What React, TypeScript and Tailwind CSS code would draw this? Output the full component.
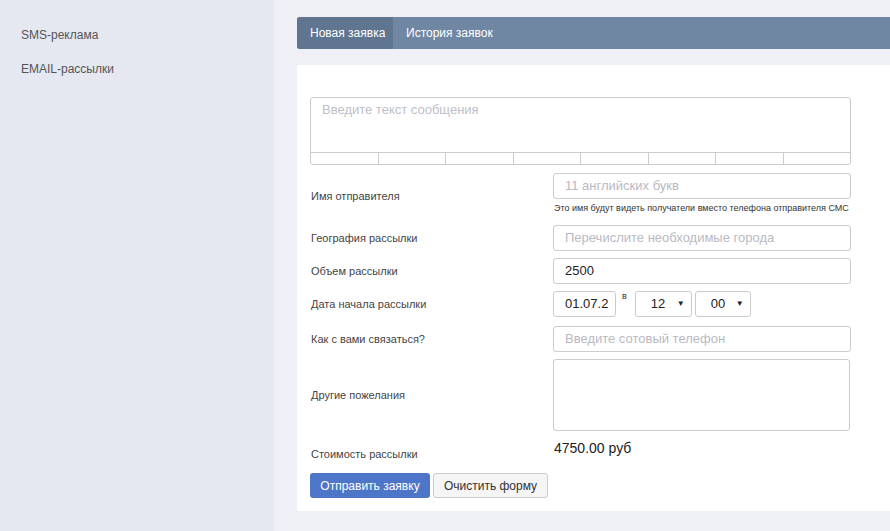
import React from "react";

const font = { fontFamily: '"Liberation Sans", Arial, sans-serif' };

const Label = ({ children }: { children: React.ReactNode }) => (
    <div className="w-[243px] shrink-0 pl-px text-[11px] text-[#444]">{children}</div>
);

const TextInput = ({ placeholder, value }: { placeholder?: string; value?: string }) => (
    <div className="h-[26px] w-[298px] rounded-[3px] border border-[#ccc] bg-white px-[11px] flex items-center text-[13px]">
        {value ? <span className="text-[#222]">{value}</span> : <span className="text-[#b9b9c3]">{placeholder}</span>}
    </div>
);

const Select = ({ value, width }: { value: string; width: string }) => (
    <div className={`h-[26px] ${width} rounded-[3px] border border-[#ccc] bg-white flex items-center justify-between pl-[15px] pr-[6px] text-[13px] text-[#222]`}>
        <span>{value}</span>
        <span className="text-[8px]">▼</span>
    </div>
);

export default function App() {
    return (
        <div className="flex h-[531px] w-[890px] overflow-hidden bg-[#eff0f5]" style={font}>
            <aside className="w-[274px] shrink-0 bg-[#e5e8f0] pl-[21px] pt-[27px] text-[12px] text-[#555]">
                <div className="h-[16px] leading-[16px]">SMS-реклама</div>
                <div className="mt-[18px] h-[16px] leading-[16px]">EMAIL-рассылки</div>
            </aside>
            <main className="ml-[23px] w-[640px] shrink-0 pt-[17px]">
                <div className="flex h-[32px] rounded-l-[3px] bg-[#6f87a2] text-[12px] text-white">
                    <div className="flex w-[96px] items-center rounded-l-[3px] bg-[#5f7590] pl-[13px]">Новая заявка</div>
                    <div className="flex items-center px-[13px]">История заявок</div>
                </div>
                <div className="mt-[16px] h-[446px] rounded-[3px] bg-white pl-[13px] pt-[32px]">
                    <div className="w-[541px] h-[68px] rounded-[3px] border border-[#ccc] flex flex-col">
                        <div className="flex-1 px-[11px] pt-[2px] text-[13px] text-[#c0c0ca]">Введите текст сообщения</div>
                        <div className="flex h-[12px] border-t border-[#ccc]">
                            {[0, 1, 2, 3, 4, 5, 6, 7].map((i) => (
                                <div key={i} className={`flex-1 ${i < 7 ? "border-r border-[#ccc]" : ""}`} />
                            ))}
                        </div>
                    </div>

                    <div className="mt-[8px] flex h-[45px] items-start">
                        <div className="w-[243px] shrink-0 pl-px pt-[15px] text-[11px] text-[#444]">Имя отправителя</div>
                        <div className="flex flex-col">
                            <TextInput placeholder="11 английских букв" />
                            <div className="mt-[4px] whitespace-nowrap pl-px text-[9px] leading-[11px] text-[#333]">
                                Это имя будут видеть получатели вместо телефона отправителя СМС
                            </div>
                        </div>
                    </div>

                    <div className="mt-[7px] flex h-[26px] items-center">
                        <Label>География рассылки</Label>
                        <TextInput placeholder="Перечислите необходимые города" />
                    </div>

                    <div className="mt-[7px] flex h-[26px] items-center">
                        <Label>Объем рассылки</Label>
                        <TextInput value="2500" />
                    </div>

                    <div className="mt-[7px] flex h-[26px] items-center">
                        <Label>Дата начала рассылки</Label>
                        <div className="flex items-start">
                            <div className="h-[26px] w-[63px] overflow-hidden rounded-[3px] border border-[#ccc] px-[11px] flex items-center text-[13px] text-[#222] whitespace-nowrap">
                                01.07.2
                            </div>
                            <span className="ml-[6px] mr-[8px] text-[9px] text-[#333] leading-none mt-[1px]">в</span>
                            <Select value="12" width="w-[57px]" />
                            <div className="w-[3px]" />
                            <Select value="00" width="w-[56px]" />
                        </div>
                    </div>

                    <div className="mt-[9px] flex h-[26px] items-center">
                        <Label>Как с вами связаться?</Label>
                        <TextInput placeholder="Введите сотовый телефон" />
                    </div>

                    <div className="mt-[7px] flex h-[72px] items-center">
                        <Label>Другие пожелания</Label>
                        <div className="h-[72px] w-[297px] rounded-[3px] border border-[#ccc]" />
                    </div>

                    <div className="mt-[9px] flex h-[28px] items-start">
                        <div className="w-[243px] shrink-0 pl-px pt-[6px] text-[11px] text-[#444]">Стоимость рассылки</div>
                        <div className="pl-px text-[14px] leading-[16px] text-[#222]">4750.00 руб</div>
                    </div>

                    <div className="mt-[5px] flex gap-[3px]">
                        <button className="h-[25px] w-[120px] rounded-[3px] bg-[#4e76c8] text-[12px] text-white">Отправить заявку</button>
                        <button className="h-[25px] w-[115px] rounded-[3px] border border-[#ccc] bg-[#f5f5f5] text-[12px] text-[#333]">Очистить форму</button>
                    </div>
                </div>
            </main>
        </div>
    );
}
